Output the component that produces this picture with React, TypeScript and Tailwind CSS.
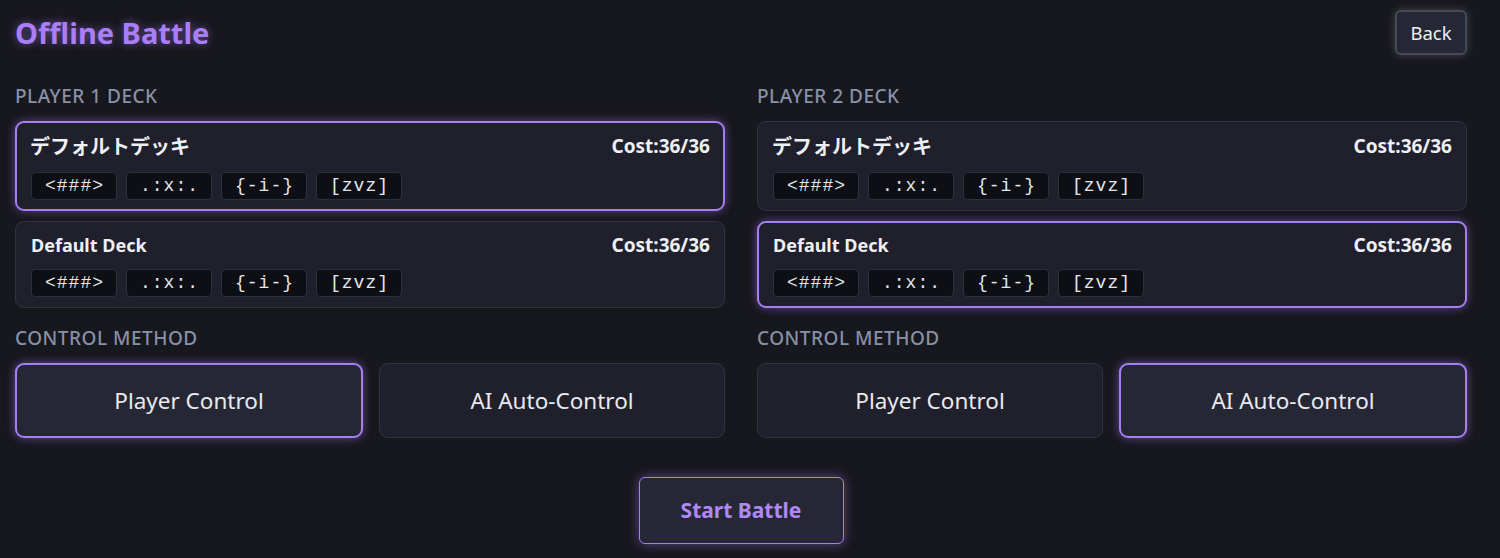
import React from "react";

const sans = { fontFamily: '"Noto Sans", "Noto Sans CJK JP", sans-serif' };

const tags = ["<###>", ".:x:.", "{-i-}", "[zvz]"];

function Tag({ t }: { t: string }) {
  return (
    <div
      className="h-[28px] w-[86px] flex items-center justify-center rounded-[4px] border border-[#2c303c] bg-[#0d0f15] text-[18px] text-[#e4e6ec] tracking-[1px] pl-[1px]"
      style={{ fontFamily: '"Liberation Mono", monospace' }}
    >
      {t}
    </div>
  );
}

function DeckCard({ name, selected, jp }: { name: string; selected: boolean; jp?: boolean }) {
  return (
    <div
      className={
        "rounded-[9px] bg-[#1f202b] " +
        (selected
          ? "border-2 border-[#a57ef2] pl-[14px] pr-[13px] pt-[9px] pb-[9px] shadow-[0_0_10px_rgba(160,120,240,0.5)]"
          : "border border-[#31343f] pl-[15px] pr-[14px] pt-[10px] pb-[10px]")
      }
    >
      <div
        className={
          "flex items-center justify-between text-[#eef0f5] font-bold " +
          (jp ? "h-[29px]" : "h-[26px]")
        }
      >
        <span className={jp ? "text-[20px] -ml-[1px]" : "text-[18px]"}>{name}</span>
        <span className="text-[19px]">Cost:36/36</span>
      </div>
      <div className="mt-[11px] flex gap-[9px]">
        {tags.map((t) => (
          <Tag key={t} t={t} />
        ))}
      </div>
    </div>
  );
}

function ControlButton({ label, selected }: { label: string; selected: boolean }) {
  return (
    <div
      className={
        "h-[75px] flex-1 rounded-[9px] flex items-center justify-center text-[22.5px] text-[#e8eaf0] " +
        (selected
          ? "border-2 border-[#a57ef2] bg-[#252834] shadow-[0_0_10px_rgba(160,120,240,0.55)]"
          : "border border-[#31343f] bg-[#1f202b]")
      }
    >
      {label}
    </div>
  );
}

function Column({
  player,
  selectedDeck,
  selectedControl,
}: {
  player: number;
  selectedDeck: number;
  selectedControl: number;
}) {
  return (
    <div className="flex-1 flex flex-col">
      <div className="h-[24px] flex items-center text-[19px] font-medium text-[#8791a8] uppercase tracking-[0.5px]">
        Player {player} Deck
      </div>
      <div className="mt-[13px] flex flex-col gap-[10px]">
        <DeckCard name="デフォルトデッキ" jp selected={selectedDeck === 0} />
        <DeckCard name="Default Deck" selected={selectedDeck === 1} />
      </div>
      <div className="mt-[18px] h-[24px] flex items-center text-[19px] font-medium text-[#8791a8] uppercase tracking-[0.5px]">
        Control Method
      </div>
      <div className="mt-[13px] flex gap-[16px]">
        <ControlButton label="Player Control" selected={selectedControl === 0} />
        <ControlButton label="AI Auto-Control" selected={selectedControl === 1} />
      </div>
    </div>
  );
}

export default function App() {
  return (
    <div className="w-[1500px] h-[558px] bg-[#17171e] overflow-hidden" style={sans}>
      <div className="w-[1452px] ml-[15px] flex flex-col">
        <div className="mt-[10px] h-[45px] flex items-center justify-between">
          <h1 className="text-[29px] font-bold text-[#a97ef6] [text-shadow:0_0_8px_rgba(167,125,246,0.55)]">
            Offline Battle
          </h1>
          <button className="h-[45px] w-[72px] rounded-[6px] border-2 border-[#454a58] bg-[#252834] text-[18.5px] text-[#eef0f5] shadow-[0_0_8px_rgba(255,255,255,0.2)]">
            Back
          </button>
        </div>
        <div className="mt-[29px] flex gap-[32px]">
          <Column player={1} selectedDeck={0} selectedControl={0} />
          <Column player={2} selectedDeck={1} selectedControl={1} />
        </div>
        <div className="mt-[39px] flex justify-center">
          <button className="h-[67px] w-[205px] rounded-[6px] border border-[#a57ef2] bg-[#252834] text-[21px] font-bold text-[#b088f6] shadow-[0_0_12px_rgba(160,120,240,0.5)]">
            Start Battle
          </button>
        </div>
      </div>
    </div>
  );
}
